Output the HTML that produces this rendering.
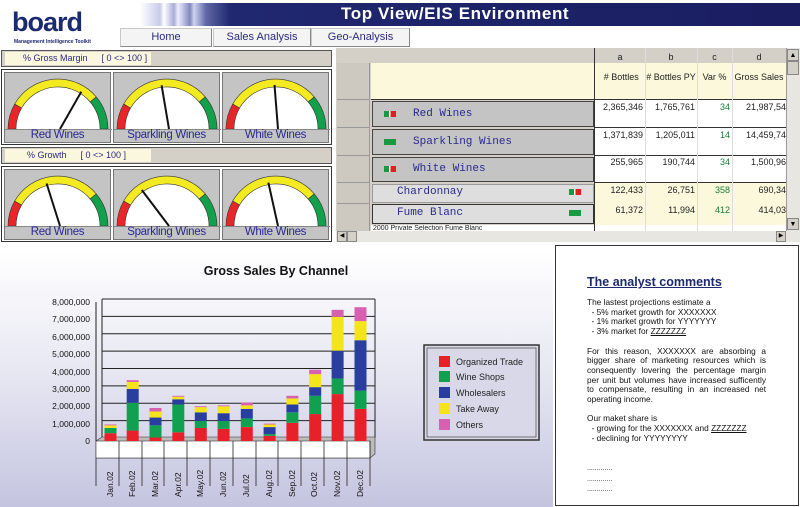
<!DOCTYPE html>
<html><head><meta charset="utf-8"><style>
*{margin:0;padding:0;box-sizing:border-box}
body{width:800px;height:507px;overflow:hidden;background:#fff;font-family:"Liberation Sans",Arial,sans-serif;position:relative}
.a{position:absolute}
.btn{position:absolute;top:28px;height:19px;background:#f4f4f4;border:1px solid #c8c8c8;border-right-color:#888;border-bottom-color:#888;font-size:11px;color:#2a2a80;text-align:center;line-height:17px}
.ghdr{position:absolute;left:1px;width:331px;height:17px;background:#d4d0c8;border:1px solid #555}
.glab{position:absolute;left:3px;top:1px;width:146px;height:13px;background:#fbf7df;font-size:9px;color:#2a2a80;line-height:13px}
.gbox{position:absolute;width:331px;height:76px;left:1px;border:1px solid #333;background:#fff}
.g{position:absolute;top:2px;width:107px;height:71px;background:#c4c4c4;border:1px solid #777}
.gl{position:absolute;left:0;top:56px;width:105px;text-align:center;font-size:11.5px;color:#2a2a90;letter-spacing:-0.3px}
.cell{position:absolute;font-size:9px;color:#222;text-align:right}
.mono{font-family:"Liberation Mono",monospace;color:#2a2a90;font-size:11px}
</style></head><body>
<svg width="0" height="0" style="position:absolute"><defs>
<symbol id="gf" viewBox="0 0 107 71">
<path d="M11,56 A42 42 0 0 1 95,56 Z" fill="#fff"/>
<path d="M3,56 A50,50 0 0 1 9.7,31 L16.6,35 A42,42 0 0 0 11,56 Z" fill="#e8262a" stroke="#333" stroke-width=".6"/>
<path d="M9.7,31 A50 50 0 0 1 91.3,23.9 L85.2,29 A42 42 0 0 0 16.6,35 Z" fill="#f4ea22" stroke="#333" stroke-width=".6"/>
<path d="M91.3,23.9 A50 50 0 0 1 103,56 L95,56 A42 42 0 0 0 85.2,29 Z" fill="#12a04a" stroke="#333" stroke-width=".6"/>
<line x1="0" y1="56.5" x2="107" y2="56.5" stroke="#888"/>
</symbol></defs></svg>

<div class="a" style="left:12px;top:7px;font:bold 27px 'Liberation Sans',sans-serif;color:#1c2a70;letter-spacing:-1px">board</div>
<div class="a" style="left:14px;top:39px;font-size:5px;color:#1c2a70;font-weight:bold">Management Intelligence Toolkit</div>
<div class="a" style="left:140px;top:3px;width:660px;height:23px;background:linear-gradient(90deg,#fff 0px,#c8cce8 20px,#fff 24px,#a8acd8 34px,#eef 38px,#8088c0 50px,#d0d4ee 54px,#6068a8 66px,#202870 90px,#1a1d60 100%)"></div>
<div class="a" style="left:341px;top:4px;font:bold 17px 'Liberation Sans',sans-serif;color:#fff;letter-spacing:0.6px">Top View/EIS Environment</div>
<div class="btn" style="left:120px;width:92px">Home</div>
<div class="btn" style="left:213px;width:98px">Sales Analysis</div>
<div class="btn" style="left:311px;width:99px">Geo-Analysis</div>

<div class="ghdr" style="top:50px"><div class="glab"><span style="margin-left:18px">% Gross Margin</span><span style="margin-left:14px">[ 0 &lt;&gt; 100 ]</span></div></div>
<div class="gbox" style="top:69px">
<div class="g" style="left:2px"><svg width="107" height="71"><use href="#gf"/><line x1="55" y1="56" x2="76.3" y2="18.7" stroke="#111" stroke-width="2"/></svg><div class="gl">Red Wines</div></div>
<div class="g" style="left:111px"><svg width="107" height="71"><use href="#gf"/><line x1="55" y1="56" x2="47.6" y2="12.3" stroke="#111" stroke-width="2"/></svg><div class="gl">Sparkling Wines</div></div>
<div class="g" style="left:220px"><svg width="107" height="71"><use href="#gf"/><line x1="55" y1="56" x2="51.5" y2="12" stroke="#111" stroke-width="2"/></svg><div class="gl">White Wines</div></div>
</div>
<div class="ghdr" style="top:147px"><div class="glab"><span style="margin-left:22px">% Growth</span><span style="margin-left:14px">[ 0 &lt;&gt; 100 ]</span></div></div>
<div class="gbox" style="top:166px">
<div class="g" style="left:2px"><svg width="107" height="71"><use href="#gf"/><line x1="55" y1="56" x2="41.6" y2="13.5" stroke="#111" stroke-width="2"/></svg><div class="gl">Red Wines</div></div>
<div class="g" style="left:111px"><svg width="107" height="71"><use href="#gf"/><line x1="55" y1="56" x2="27.8" y2="20" stroke="#111" stroke-width="2"/></svg><div class="gl">Sparkling Wines</div></div>
<div class="g" style="left:220px"><svg width="107" height="71"><use href="#gf"/><line x1="55" y1="56" x2="45.4" y2="12.7" stroke="#111" stroke-width="2"/></svg><div class="gl">White Wines</div></div>
</div>

<div class="a" style="left:336px;top:48px;width:464px;height:194px;background:#d4d0c8"></div>
<div class="a" style="left:337px;top:63px;width:33px;height:168px;background:#cdc9c1;border-right:1px solid #999"></div>
<div class="a" style="left:337px;top:99px;width:33px;height:1px;background:#999"></div>
<div class="a" style="left:337px;top:127px;width:33px;height:1px;background:#999"></div>
<div class="a" style="left:337px;top:155px;width:33px;height:1px;background:#999"></div>
<div class="a" style="left:337px;top:182px;width:33px;height:1px;background:#999"></div>
<div class="a" style="left:337px;top:203px;width:33px;height:1px;background:#999"></div>
<div class="a" style="left:371px;top:63px;width:415px;height:37px;background:#fbf8dc;border-bottom:1px solid #333"></div>
<div class="a" style="left:595px;top:100px;width:191px;height:83px;background:#fff"></div>
<div class="a" style="left:595px;top:183px;width:191px;height:42px;background:#fbf8dc"></div>
<div class="a" style="left:371px;top:225px;width:415px;height:6px;background:#fff"></div>
<div class="a" style="left:594px;top:48px;width:1px;height:183px;background:#333"></div>
<div class="cell" style="left:595px;top:52px;width:50px;text-align:center">a</div>
<div class="cell" style="left:645px;top:52px;width:52px;text-align:center">b</div>
<div class="cell" style="left:697px;top:52px;width:35px;text-align:center">c</div>
<div class="cell" style="left:732px;top:52px;width:54px;text-align:center">d</div>
<div class="cell" style="left:595px;top:72px;width:50px;text-align:center">&nbsp;# Bottles</div>
<div class="cell" style="left:645px;top:72px;width:52px;text-align:center"># Bottles PY</div>
<div class="cell" style="left:697px;top:72px;width:35px;text-align:center">Var %</div>
<div class="cell" style="left:732px;top:72px;width:58px;text-align:left;overflow:hidden;white-space:nowrap">&nbsp;Gross Sales</div>
<div class="a" style="left:372px;top:101px;width:222px;height:26px;background:#c4c4c4;border:1px solid #444"></div>
<div class="a" style="left:372px;top:129px;width:222px;height:26px;background:#c4c4c4;border:1px solid #444"></div>
<div class="a" style="left:372px;top:157px;width:222px;height:25px;background:#c4c4c4;border:1px solid #444"></div>
<div class="a" style="left:372px;top:184px;width:222px;height:19px;background:#dedede;border:1px solid #999"></div>
<div class="a" style="left:372px;top:204px;width:222px;height:20px;background:#dedede;border:1px solid #333"></div>
<div class="a mono" style="left:413px;top:108px">Red Wines</div>
<div class="a mono" style="left:413px;top:136px">Sparkling Wines</div>
<div class="a mono" style="left:413px;top:163px">White Wines</div>
<div class="a mono" style="left:397px;top:186px">Chardonnay</div>
<div class="a mono" style="left:397px;top:207px">Fume Blanc</div>
<div class="a" style="left:384px;top:111px;width:12px;height:6px;background:linear-gradient(90deg,#1a9a40 40%,#fff 40%,#fff 55%,#e02020 55%)"></div>
<div class="a" style="left:384px;top:139px;width:12px;height:6px;background:#1a9a40"></div>
<div class="a" style="left:384px;top:166px;width:12px;height:6px;background:linear-gradient(90deg,#1a9a40 40%,#fff 40%,#fff 55%,#e02020 55%)"></div>
<div class="a" style="left:569px;top:189px;width:12px;height:6px;background:linear-gradient(90deg,#1a9a40 40%,#fff 40%,#fff 55%,#e02020 55%)"></div>
<div class="a" style="left:569px;top:210px;width:12px;height:6px;background:#1a9a40"></div>
<div class="a" style="left:595px;top:127px;width:191px;height:1px;background:#333"></div>
<div class="a" style="left:595px;top:155px;width:191px;height:1px;background:#333"></div>
<div class="a" style="left:595px;top:182px;width:191px;height:1px;background:#333"></div>
<div class="a" style="left:645px;top:48px;width:1px;height:183px;background:#ddd"></div>
<div class="a" style="left:697px;top:48px;width:1px;height:183px;background:#ddd"></div>
<div class="a" style="left:732px;top:48px;width:1px;height:183px;background:#ddd"></div>
<div class="cell" style="left:595px;top:102px;width:48px">2,365,346</div><div class="cell" style="left:645px;top:102px;width:50px">1,765,761</div><div class="cell" style="left:697px;top:102px;width:33px;color:#1a7a3a">34</div><div class="cell" style="left:732px;top:102px;width:54px">21,987,54</div>
<div class="cell" style="left:595px;top:130px;width:48px">1,371,839</div><div class="cell" style="left:645px;top:130px;width:50px">1,205,011</div><div class="cell" style="left:697px;top:130px;width:33px;color:#1a7a3a">14</div><div class="cell" style="left:732px;top:130px;width:54px">14,459,74</div>
<div class="cell" style="left:595px;top:157px;width:48px">255,965</div><div class="cell" style="left:645px;top:157px;width:50px">190,744</div><div class="cell" style="left:697px;top:157px;width:33px;color:#1a7a3a">34</div><div class="cell" style="left:732px;top:157px;width:54px">1,500,96</div>
<div class="cell" style="left:595px;top:185px;width:48px">122,433</div><div class="cell" style="left:645px;top:185px;width:50px">26,751</div><div class="cell" style="left:697px;top:185px;width:33px;color:#1a7a3a">358</div><div class="cell" style="left:732px;top:185px;width:54px">690,34</div>
<div class="cell" style="left:595px;top:205px;width:48px">61,372</div><div class="cell" style="left:645px;top:205px;width:50px">11,994</div><div class="cell" style="left:697px;top:205px;width:33px;color:#1a7a3a">412</div><div class="cell" style="left:732px;top:205px;width:54px">414,03</div>
<div class="a" style="left:373px;top:225px;font-size:7px;color:#222;height:6px;overflow:hidden">2000 Private Selection Fume Blanc</div>
<div class="a" style="left:786px;top:48px;width:14px;height:183px;background:#e8e6e0;border-left:1px solid #999"></div>
<div class="a" style="left:787px;top:49px;width:12px;height:12px;background:#d4d0c8;border:1px solid #888;font-size:7px;text-align:center;line-height:11px">▲</div>
<div class="a" style="left:787px;top:61px;width:12px;height:14px;background:#d4d0c8;border:1px solid #888"></div>
<div class="a" style="left:787px;top:218px;width:12px;height:12px;background:#d4d0c8;border:1px solid #888;font-size:7px;text-align:center;line-height:11px">▼</div>
<div class="a" style="left:336px;top:231px;width:464px;height:11px;background:#e8e6e0"></div>
<div class="a" style="left:337px;top:231px;width:10px;height:11px;background:#d4d0c8;border:1px solid #888;font-size:6px;line-height:9px;text-align:center">◀</div>
<div class="a" style="left:347px;top:231px;width:10px;height:11px;background:#d4d0c8;border:1px solid #888"></div>
<div class="a" style="left:776px;top:231px;width:10px;height:11px;background:#d4d0c8;border:1px solid #888;font-size:6px;line-height:9px;text-align:center">▶</div>

<svg class="a" style="left:0;top:250px" width="553" height="257">
<defs><linearGradient id="bg" x1="0" y1="0" x2="0" y2="1"><stop offset="0" stop-color="#fff"/><stop offset=".5" stop-color="#e6e6f2"/><stop offset="1" stop-color="#c4c4e0"/></linearGradient></defs>
<rect width="553" height="257" fill="url(#bg)"/>
<text x="276" y="25" text-anchor="middle" font-size="12.5" font-weight="bold" fill="#111">Gross Sales By Channel</text>
<g stroke="#222" stroke-width="1">
<line x1="102" y1="49" x2="375" y2="49"/><line x1="102" y1="66.4" x2="375" y2="66.4"/><line x1="102" y1="83.8" x2="375" y2="83.8"/><line x1="102" y1="101.1" x2="375" y2="101.1"/><line x1="102" y1="118.5" x2="375" y2="118.5"/><line x1="102" y1="135.9" x2="375" y2="135.9"/><line x1="102" y1="153.3" x2="375" y2="153.3"/><line x1="102" y1="170.6" x2="375" y2="170.6"/>
<line x1="96" y1="52" x2="96" y2="191"/><line x1="102" y1="49" x2="102" y2="188"/><line x1="375" y1="49" x2="375" y2="188"/>
</g>
<g font-size="8.5" fill="#111" text-anchor="end">
<text x="90" y="55">8,000,000</text><text x="90" y="72">7,000,000</text><text x="90" y="90">6,000,000</text><text x="90" y="107">5,000,000</text><text x="90" y="125">4,000,000</text><text x="90" y="142">3,000,000</text><text x="90" y="159">2,000,000</text><text x="90" y="177">1,000,000</text><text x="90" y="194">0</text>
</g>
<polygon points="96,191 102,187 375,187 375,204 370,208 96,208" fill="#bbb" stroke="#333" stroke-width=".6"/>
<rect x="96" y="191" width="274" height="17" fill="#fff" stroke="#333" stroke-width=".6"/>
<g transform="translate(0,191) scale(1,-17.375)">
<rect x="104.5" y="0" width="12" height=".45" fill="#e8202a"/><rect x="104.5" y=".45" width="12" height=".3" fill="#10a050"/><rect x="104.5" y=".75" width="12" height=".15" fill="#f4e41a"/><rect x="104.5" y=".9" width="12" height=".05" fill="#d860b0"/>
<rect x="126.7" y="0" width="12" height=".6" fill="#e8202a"/><rect x="126.7" y=".6" width="12" height="1.6" fill="#10a050"/><rect x="126.7" y="2.2" width="12" height=".8" fill="#2a3ea0"/><rect x="126.7" y="3" width="12" height=".4" fill="#f4e41a"/><rect x="126.7" y="3.4" width="12" height=".1" fill="#d860b0"/>
<rect x="149.5" y="0" width="12" height=".2" fill="#e8202a"/><rect x="149.5" y=".2" width="12" height=".7" fill="#10a050"/><rect x="149.5" y=".9" width="12" height=".45" fill="#2a3ea0"/><rect x="149.5" y="1.35" width="12" height=".35" fill="#f4e41a"/><rect x="149.5" y="1.7" width="12" height=".2" fill="#d860b0"/>
<rect x="172.3" y="0" width="12" height=".5" fill="#e8202a"/><rect x="172.3" y=".5" width="12" height="1.6" fill="#10a050"/><rect x="172.3" y="2.1" width="12" height=".3" fill="#2a3ea0"/><rect x="172.3" y="2.4" width="12" height=".15" fill="#f4e41a"/><rect x="172.3" y="2.55" width="12" height=".05" fill="#d860b0"/>
<rect x="194.8" y="0" width="12" height=".75" fill="#e8202a"/><rect x="194.8" y=".75" width="12" height=".4" fill="#10a050"/><rect x="194.8" y="1.15" width="12" height=".5" fill="#2a3ea0"/><rect x="194.8" y="1.65" width="12" height=".3" fill="#f4e41a"/><rect x="194.8" y="1.95" width="12" height=".05" fill="#d860b0"/>
<rect x="217.6" y="0" width="12" height=".7" fill="#e8202a"/><rect x="217.6" y=".7" width="12" height=".45" fill="#10a050"/><rect x="217.6" y="1.15" width="12" height=".45" fill="#2a3ea0"/><rect x="217.6" y="1.6" width="12" height=".4" fill="#f4e41a"/><rect x="217.6" y="2" width="12" height=".05" fill="#d860b0"/>
<rect x="240.8" y="0" width="12" height=".8" fill="#e8202a"/><rect x="240.8" y=".8" width="12" height=".5" fill="#10a050"/><rect x="240.8" y="1.3" width="12" height=".55" fill="#2a3ea0"/><rect x="240.8" y="1.85" width="12" height=".2" fill="#f4e41a"/><rect x="240.8" y="2.05" width="12" height=".15" fill="#d860b0"/>
<rect x="263.6" y="0" width="12" height=".3" fill="#e8202a"/><rect x="263.6" y=".3" width="12" height=".1" fill="#10a050"/><rect x="263.6" y=".4" width="12" height=".4" fill="#2a3ea0"/><rect x="263.6" y=".8" width="12" height=".15" fill="#f4e41a"/><rect x="263.6" y=".95" width="12" height=".05" fill="#d860b0"/>
<rect x="286.4" y="0" width="12" height="1.05" fill="#e8202a"/><rect x="286.4" y="1.05" width="12" height=".6" fill="#10a050"/><rect x="286.4" y="1.65" width="12" height=".45" fill="#2a3ea0"/><rect x="286.4" y="2.1" width="12" height=".35" fill="#f4e41a"/><rect x="286.4" y="2.45" width="12" height=".15" fill="#d860b0"/>
<rect x="309.2" y="0" width="12" height="1.55" fill="#e8202a"/><rect x="309.2" y="1.55" width="12" height="1.05" fill="#10a050"/><rect x="309.2" y="2.6" width="12" height=".5" fill="#2a3ea0"/><rect x="309.2" y="3.1" width="12" height=".75" fill="#f4e41a"/><rect x="309.2" y="3.85" width="12" height=".25" fill="#d860b0"/>
<rect x="331.6" y="0" width="12" height="2.7" fill="#e8202a"/><rect x="331.6" y="2.7" width="12" height=".9" fill="#10a050"/><rect x="331.6" y="3.6" width="12" height="1.6" fill="#2a3ea0"/><rect x="331.6" y="5.2" width="12" height="1.95" fill="#f4e41a"/><rect x="331.6" y="7.15" width="12" height=".4" fill="#d860b0"/>
<rect x="354.5" y="0" width="12" height="1.85" fill="#e8202a"/><rect x="354.5" y="1.85" width="12" height="1.05" fill="#10a050"/><rect x="354.5" y="2.9" width="12" height="2.9" fill="#2a3ea0"/><rect x="354.5" y="5.8" width="12" height="1.1" fill="#f4e41a"/><rect x="354.5" y="6.9" width="12" height=".8" fill="#d860b0"/>
</g>
<g stroke="#222" stroke-width=".8">
<line x1="96" y1="208" x2="96" y2="236"/><line x1="119" y1="191" x2="119" y2="236"/><line x1="142" y1="191" x2="142" y2="236"/><line x1="164" y1="191" x2="164" y2="236"/><line x1="187" y1="191" x2="187" y2="236"/><line x1="210" y1="191" x2="210" y2="236"/><line x1="233" y1="191" x2="233" y2="236"/><line x1="256" y1="191" x2="256" y2="236"/><line x1="278" y1="191" x2="278" y2="236"/><line x1="301" y1="191" x2="301" y2="236"/><line x1="324" y1="191" x2="324" y2="236"/><line x1="347" y1="191" x2="347" y2="236"/><line x1="370" y1="191" x2="370" y2="236"/>
</g>
<g font-size="8.5" fill="#111">
<text transform="translate(113,247) rotate(-90)">Jan.02</text><text transform="translate(135,247) rotate(-90)">Feb.02</text><text transform="translate(158,247) rotate(-90)">Mar.02</text><text transform="translate(181,247) rotate(-90)">Apr.02</text><text transform="translate(203,247) rotate(-90)">May.02</text><text transform="translate(226,247) rotate(-90)">Jun.02</text><text transform="translate(249,247) rotate(-90)">Jul.02</text><text transform="translate(272,247) rotate(-90)">Aug.02</text><text transform="translate(295,247) rotate(-90)">Sep.02</text><text transform="translate(317,247) rotate(-90)">Oct.02</text><text transform="translate(340,247) rotate(-90)">Nov.02</text><text transform="translate(363,247) rotate(-90)">Dec.02</text>
</g>
<rect x="424" y="95" width="115" height="95" fill="#d8d8e8" stroke="#333" stroke-width="1.5"/>
<rect x="427" y="98" width="109" height="89" fill="none" stroke="#555" stroke-width=".8"/>
<rect x="439" y="106" width="11" height="11" fill="#e8202a"/><rect x="439" y="121" width="11" height="11" fill="#10a050"/><rect x="439" y="137" width="11" height="11" fill="#2a3ea0"/><rect x="439" y="153" width="11" height="11" fill="#f4e41a"/><rect x="439" y="169" width="11" height="11" fill="#d860b0"/>
<g font-size="9" fill="#222"><text x="456" y="115">Organized Trade</text><text x="456" y="130">Wine Shops</text><text x="456" y="146">Wholesalers</text><text x="456" y="162">Take Away</text><text x="456" y="178">Others</text></g>
</svg>

<div class="a" style="left:555px;top:245px;width:244px;height:261px;border:1px solid #333;background:#fff"></div>
<div class="a" style="left:587px;top:275px;font-size:12.5px;font-weight:bold;color:#1c2a70;text-decoration:underline">The analyst comments</div>
<div class="a" style="left:587px;top:298px;width:179px;font-size:8.3px;line-height:9.7px;color:#111">
The lastest projections estimate a<br>&nbsp;&nbsp;- 5% market growth for XXXXXXX<br>&nbsp;&nbsp;- 1% market growth for YYYYYYY<br>&nbsp;&nbsp;- 3% market for <u>ZZZZZZZ</u><br><br>
<div style="text-align:justify">For this reason, XXXXXXX are absorbing a bigger share of marketing resources which is consequently lovering the percentage margin per unit but volumes have increased sufficently to compensate, resulting in an increased net operating income.</div><br>
Our maket share is<br>&nbsp;&nbsp;- growing for the XXXXXXX and <u>ZZZZZZZ</u><br>&nbsp;&nbsp;- declining for YYYYYYYY<br><br><br>
<span style="font-size:7px">.............</span><br><span style="font-size:7px">.............</span><br><span style="font-size:7px">.............</span>
</div>
</body></html>
